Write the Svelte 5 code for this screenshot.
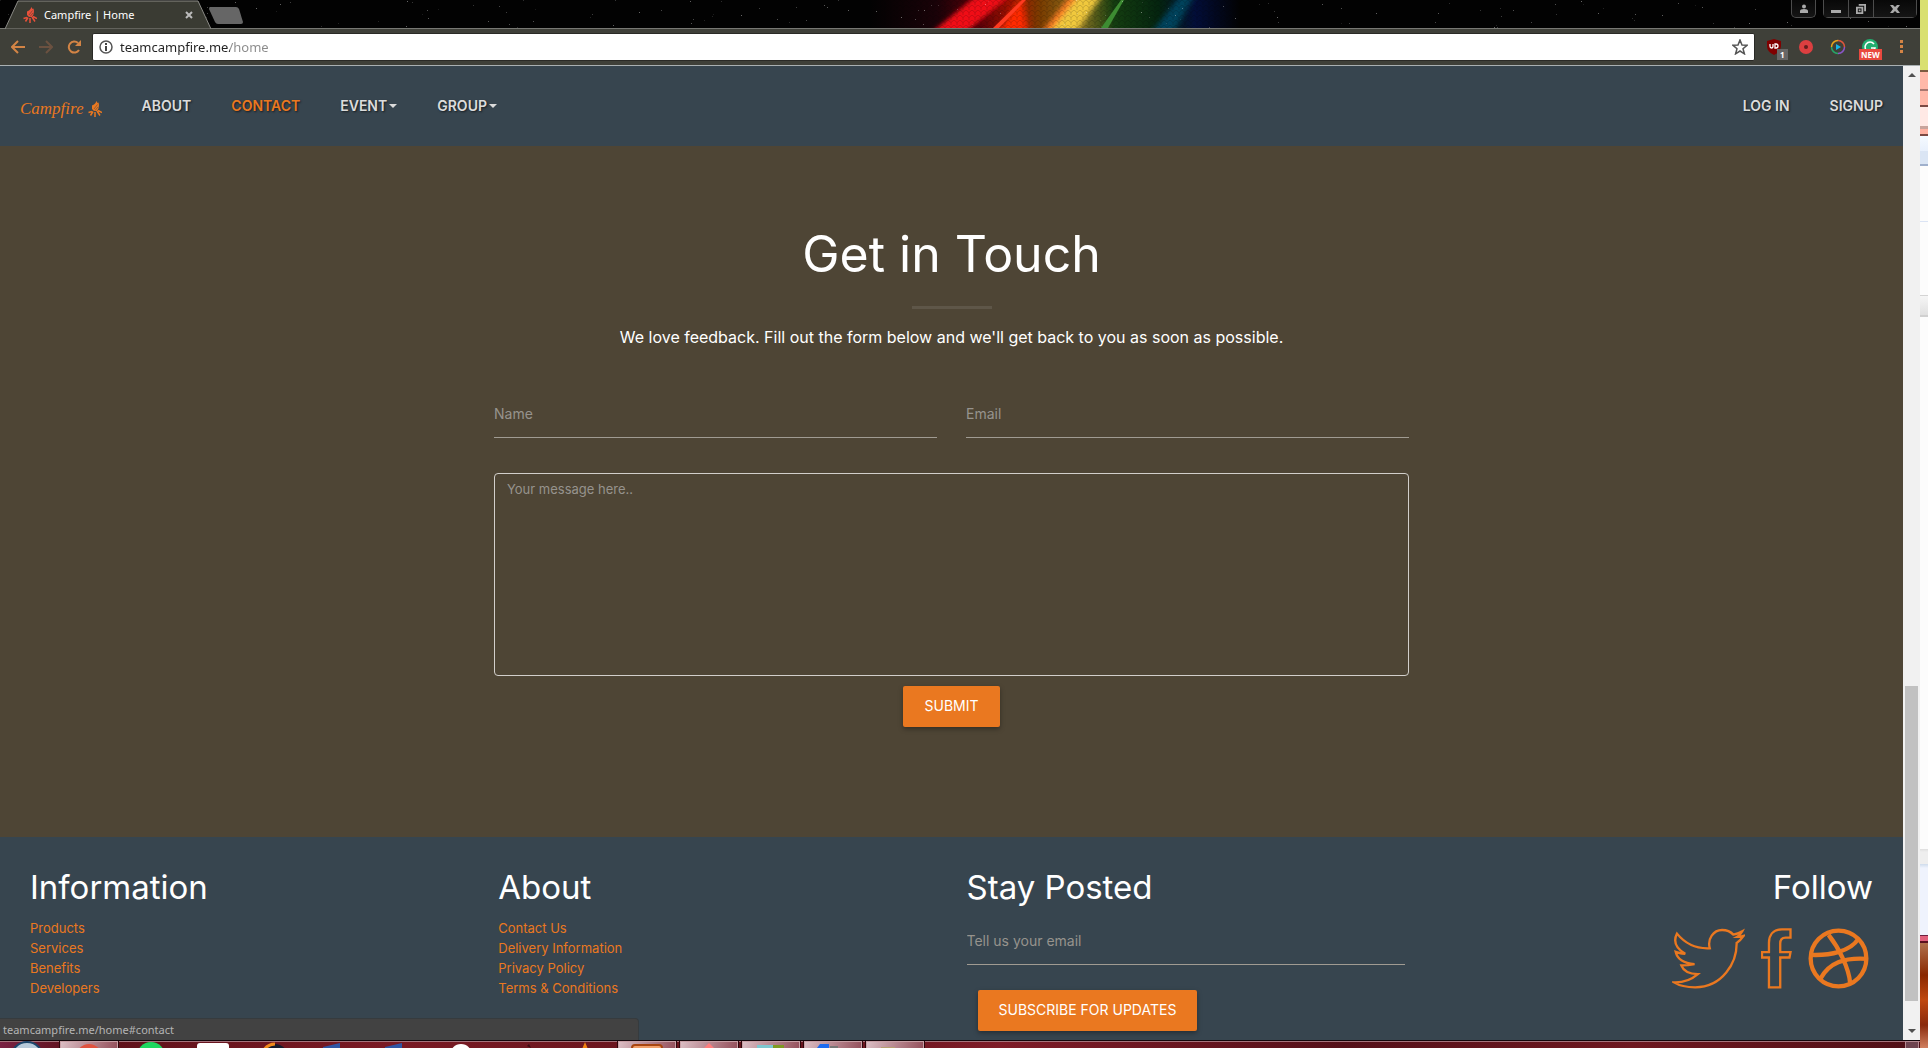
<script>
  const navLinks = [
    { label: 'ABOUT', href: '#about' },
    { label: 'CONTACT', href: '#contact', active: true },
    { label: 'EVENT', href: '#event', caret: true },
    { label: 'GROUP', href: '#group', caret: true }
  ];
  const accountLinks = [
    { label: 'LOG IN', href: '#login' },
    { label: 'SIGNUP', href: '#signup' }
  ];
  const columns = [
    { title: 'Information', links: ['Products', 'Services', 'Benefits', 'Developers'] },
    { title: 'About', links: ['Contact Us', 'Delivery Information', 'Privacy Policy', 'Terms & Conditions'] }
  ];
  const stars = Array.from({ length: 150 }, (_, i) => ({
    x: (i * 397 + ((i * i * 31) % 211)) % 1920,
    y: (i * 17 + ((i * i) % 13)) % 28,
    o: 0.1 + ((i * 7) % 10) / 30
  }));
  const tasks = ['chrome', 'green', 'white', 'fox', 'blue', 'blue2', 'disc', 'dot', 'cone', 'orange', 'pink', 'teal', 'navy', 'folder'];
  const raised = new Set(['chrome', 'orange', 'pink', 'teal', 'navy', 'folder']);
</script>

{#snippet campfire()}
  <svg class="fire" viewBox="0 0 28 32" aria-hidden="true">
    <path d="M17 0l2 4 2-1 1 5-1 7-3 5h-6l-4-4V9l4-2 3-3z" />
    <path class="bark" d="M12 16l7-9M14 19l6-7" />
    <path class="log" d="M10 21l-5 8M18 20l6 9M14 22v10M8 21l-7 2M20 19l8 4" />
  </svg>
{/snippet}

<div class="desktop">
  <div class="window">
    <header class="titlebar">
      <svg class="sky" viewBox="0 0 1920 28" preserveAspectRatio="none" aria-hidden="true">
        <defs>
          <linearGradient id="spectrum" x1="0" x2="1">
            <stop offset="0" stop-color="#020202" />
            <stop offset=".18" stop-color="#1a0208" />
            <stop offset=".3" stop-color="#5b0007" />
            <stop offset=".38" stop-color="#a01200" />
            <stop offset=".46" stop-color="#7a3c00" />
            <stop offset=".57" stop-color="#857020" />
            <stop offset=".66" stop-color="#143d10" />
            <stop offset=".78" stop-color="#04240f" />
            <stop offset=".88" stop-color="#020d38" />
            <stop offset="1" stop-color="#020202" />
          </linearGradient>
          <pattern id="mesh" width="6" height="5" patternUnits="userSpaceOnUse">
            <path d="M0 0l3 2.500L6 0M3 2.500V5" fill="none" stroke="#000" stroke-opacity=".16" />
          </pattern>
          <filter id="soft" x="-30%" width="160%"><feGaussianBlur stdDeviation="3 1" /></filter>
        </defs>
        <rect width="1920" height="28" fill="#020202" />
        <rect x="870" width="370" height="28" fill="url(#spectrum)" />
        <g filter="url(#soft)">
          <path d="M932 32L976-4h34l-44 36z" fill="#f00c14" />
          <path d="M998 32l24-36 6 36z" fill="#ff2a06" />
          <path d="M1042 32l28-36h8l-26 36z" fill="#ff7a20" />
          <path d="M1050 32l28-36h24l-26 36z" fill="#f0c83c" />
          <path d="M1152 32l28-36h14l-20 36z" fill="#06425c" />
        </g>
        <rect x="870" width="370" height="28" fill="url(#mesh)" />
        <path d="M993 28L1022 0h4l-27 28z" fill="#ff3a20" />
        <path d="M1101 28l20-28h3l-16 28z" fill="#3d8c32" />
        {#each stars as s}
          <rect x={s.x} y={s.y} width="1" height="1" fill="#fff" opacity={s.o} />
        {/each}
      </svg>
      <div class="tab">
        <svg class="tab-shape" viewBox="0 0 206 29" aria-hidden="true">
          <path d="M0 29L13 1h180l13 28z" fill="#3a3b33" stroke="#8b8b86" />
        </svg>
        <span class="tab-icon">{@render campfire()}</span>
        <span class="tab-title">Campfire | Home</span>
        <button class="plain close" aria-label="Close tab">
          <svg viewBox="0 0 8 8"><path d="M1 1l6 6M7 1L1 7" stroke="#bbb" stroke-width="2" /></svg>
        </button>
      </div>
      <button class="plain newtab" aria-label="New tab">
        <svg viewBox="0 0 34 18"><path d="M1 0h26q2 0 3 2l4 13q0 2-2 2H9q-2 0-3-2L0 2q0-2 1-2z" fill="#666" /></svg>
      </button>
      <div class="controls">
        <button class="ctl user" aria-label="Account">
          <svg viewBox="0 0 10 10"><circle cx="5" cy="2.500" r="2" /><path d="M1 9V7q0-2 4-2t4 2v2z" /></svg>
        </button>
        <div class="group">
          <button class="ctl" aria-label="Minimize"><svg viewBox="0 0 10 10"><path d="M0 6h10v3H0z" /></svg></button>
          <button class="ctl" aria-label="Restore">
            <svg viewBox="0 0 11 11"><path d="M3 0h8v8H9V2H3zM0 3h8v8H0zm2 2v4h4V5zm1 1h2v2H3z" fill-rule="evenodd" /></svg>
          </button>
          <button class="ctl wide" aria-label="Close"><svg viewBox="0 0 10 10"><path d="M0 1h3l2 2 2-2h3L7 5l3 4H7L5 7 3 9H0l3-4z" /></svg></button>
        </div>
      </div>
    </header>

    <div class="toolbar">
      <div class="history">
        <button class="plain" aria-label="Back"><svg class="i14" viewBox="0 0 14 14"><path d="M14 7H2M7 1L1 7l6 6" stroke="#d38445" /></svg></button>
        <button class="plain" aria-label="Forward"><svg class="i14" viewBox="0 0 14 14"><path d="M0 7h12M7 1l6 6-6 6" stroke="#6b5140" /></svg></button>
        <button class="plain" aria-label="Reload">
          <svg class="i14" viewBox="0 0 14 14"><path d="M11 3a5.500 5.500 0 1 0 1 7" stroke="#d38445" /><path d="M14 0v6H8z" fill="#d38445" /></svg>
        </button>
      </div>
      <div class="address">
        <svg class="i14" viewBox="0 0 14 14" aria-hidden="true">
          <circle cx="7" cy="7" r="6" stroke="#555" stroke-width="1.500" /><path d="M7 6v5M7 3v2" stroke="#444" stroke-width="2" />
        </svg>
        <input class="url" type="text" value="teamcampfire.me/home" aria-label="Address" />
        <button class="plain" aria-label="Bookmark this page">
          <svg class="i16" viewBox="0 0 16 16"><path d="M8 1l2 5 5 .3-4 3.500 1.400 5L8 12l-4.400 2.800 1.400-5L1 6.300 6 6z" stroke="#555" stroke-width="1.500" /></svg>
        </button>
      </div>
      <div class="extensions">
        <button class="plain ext" aria-label="Content blocker">
          <svg class="i16" viewBox="0 0 16 16">
            <path d="M8 0l7 2v5q0 6-7 9-7-3-7-9V2z" fill="#800000" />
            <path d="M4 5v2q0 2 1.500 2T7 7V5M9 5v4h1q2 0 2-2t-2-2z" fill="none" stroke="#fff" stroke-width="1.300" />
          </svg>
          <span class="badge grey">1</span>
        </button>
        <button class="plain ext" aria-label="Recorder"><svg class="i16" viewBox="0 0 16 16"><circle cx="8" cy="8" r="7" fill="#dc3f40" /><circle cx="8" cy="8" r="2" fill="#641d1d" /></svg></button>
        <button class="plain ext" aria-label="Player">
          <svg class="i16" viewBox="0 0 16 16">
            <g stroke-width="1.500"><path d="M1.500 8A6.500 6.500 0 0 1 8 1.500" stroke="#e8a51c" /><path d="M8 1.500A6.500 6.500 0 0 1 14.500 8" stroke="#e0563c" /><path d="M14.500 8A6.500 6.500 0 0 1 8 14.500" stroke="#8a55c8" /><path d="M8 14.500A6.500 6.500 0 0 1 1.500 8" stroke="#27a567" /></g>
            <path d="M6 5l5 3-5 3z" fill="#14b5e8" />
          </svg>
        </button>
        <button class="plain ext" aria-label="Writing helper">
          <svg class="i16" viewBox="0 0 16 16"><circle cx="8" cy="8" r="8" fill="#22ad70" /><path d="M12 5a5 5 0 1 0 1 4H9" stroke="#fff" stroke-width="1.500" /></svg>
          <span class="badge red">NEW</span>
        </button>
        <button class="plain menu" aria-label="Menu"><svg viewBox="0 0 4 14"><path d="M0 0h3v3H0zM0 5h3v3H0zM0 10h3v3H0z" fill="#d38445" /></svg></button>
      </div>
    </div>

    <div class="viewport">
      <div class="page">
        <nav class="nav">
          <a class="brand" href="#home"><span>Campfire</span>{@render campfire()}</a>
          <div class="links">
            {#each navLinks as l}
              <a href={l.href} class:active={l.active}>{l.label}{#if l.caret}<i class="caret"></i>{/if}</a>
            {/each}
          </div>
          <div class="links">
            {#each accountLinks as l}<a href={l.href}>{l.label}</a>{/each}
          </div>
        </nav>

        <main class="contact" id="contact">
          <h1>Get in Touch</h1>
          <hr />
          <p>We love feedback. Fill out the form below and we'll get back to you as soon as possible.</p>
          <form class="form">
            <div class="pair">
              <input class="field" type="text" placeholder="Name" aria-label="Name" />
              <input class="field" type="email" placeholder="Email" aria-label="Email" />
            </div>
            <textarea placeholder="Your message here.." aria-label="Your message"></textarea>
            <button class="btn" type="button">SUBMIT</button>
          </form>
        </main>

        <footer class="footer">
          {#each columns as c}
            <section>
              <h2>{c.title}</h2>
              <ul>
                {#each c.links as l}<li><a href="#contact">{l}</a></li>{/each}
              </ul>
            </section>
          {/each}
          <section>
            <h2>Stay Posted</h2>
            <input class="field" type="email" placeholder="Tell us your email" aria-label="Your email" />
            <button class="btn subscribe" type="button">SUBSCRIBE FOR UPDATES</button>
          </section>
          <section class="follow">
            <h2>Follow</h2>
            <div class="social">
              <a href="#twitter" aria-label="Twitter">
                <svg viewBox="158 805 222 184"><path stroke-width="7" d="M173 822C200 855 235 868 272 866 264 838 283 811 309 811 325 811 335 816 343 825 352 824 363 819 370 815 366 823 361 828 354 832 361 832 368 831 374 829 368 838 361 845 353 850 354 910 310 984 228 984 204 984 180 979 164 969 190 970 215 962 236 944 210 944 192 934 186 918 200 918 212 917 226 914 196 912 174 900 169 877 178 881 188 882 198 883 170 866 161 845 173 822Z" /></svg>
              </a>
              <a href="#facebook" aria-label="Facebook">
                <svg viewBox="425 805 93 184"><path stroke-width="7" d="M449 984V894H428V878H449V850C449 825 463 809 488 809H514V834H499C487 834 483 840 483 852V878H514L511 894H483V984Z" /></svg>
              </a>
              <a href="#dribbble" aria-label="Dribbble">
                <svg viewBox="562 805 184 184"><g stroke-width="13"><circle cx="654" cy="897" r="84" /><path d="M624 826C655 865 685 925 689 970M568 886C630 889 690 875 714 838M600 957C625 910 670 893 742 898" /></g></svg>
              </a>
            </div>
          </section>
        </footer>
      </div>

      <div class="scrollbar" aria-hidden="true">
        <i class="arrow up"></i>
        <div class="track"><div class="thumb"></div></div>
        <i class="arrow down"></i>
      </div>
      <div class="status">teamcampfire.me/home#contact</div>
    </div>

    <div class="taskbar">
      <button class="task start" aria-label="Start"><svg viewBox="0 0 58 24"><circle cx="27" cy="17" r="16" fill="#b8cbdb" stroke="#1c466c" stroke-width="2" /></svg></button>
      {#each tasks as t}
        <button class="task" class:raised={raised.has(t)} aria-label={t}>
          <svg viewBox="0 0 58 24">
            {#if t === 'chrome'}<circle cx="29" cy="16" r="13" fill="#e0523f" />
            {:else if t === 'green'}<circle cx="29" cy="15" r="14" fill="#1fd760" />
            {:else if t === 'white'}<rect x="13" y="2" width="32" height="22" rx="3" fill="#fff" />
            {:else if t === 'fox'}<circle cx="29" cy="16" r="13" fill="#151b2d" /><path d="M18 9q4-6 11-6" stroke="#f08a1c" stroke-width="3" />
            {:else if t === 'blue' || t === 'blue2'}<path d="M15 6l17-4v8H15z" fill="#2f56a5" />
            {:else if t === 'disc'}<circle cx="29" cy="14" r="11" fill="#fff" />
            {:else if t === 'dot'}<path d="M33 5l2-2 2 4z" fill="#3b0b12" />
            {:else if t === 'cone'}<path d="M29 1l5 12H24z" fill="#f08010" />
            {:else if t === 'orange'}<rect x="14" y="4" width="30" height="18" rx="3" fill="#f2a06a" stroke="#a84510" stroke-width="2" />
            {:else if t === 'pink'}<path d="M29 2l10 10H19z" fill="#ff7d7d" />
            {:else if t === 'teal'}<path d="M15 4h16v10H15z" fill="#7dc8d0" /><path d="M31 4h11v10H31z" fill="#7f9a22" />
            {:else if t === 'navy'}<path d="M13 7l3-4h9v8H13z" fill="#1c6bf0" /><path d="M26 5h8v8h-8z" fill="#777" />
            {:else}<path d="M15 6h14v8H15z" fill="#b8a070" />{/if}
          </svg>
        </button>
      {/each}
      <button class="peek" aria-label="Show desktop"></button>
    </div>
  </div>
  <div class="behind" aria-hidden="true"></div>
</div>

<style>
  :global(body) { margin: 0; background: #000; }
  .desktop { display: grid; grid-template-columns: minmax(0, 1fr) 8px; min-height: 100vh; font-family: Inter, 'Liberation Sans', sans-serif; }
  .desktop :global(*) { box-sizing: border-box; }
  .window { display: flex; flex-direction: column; min-width: 0; }
  svg { display: block; fill: none; }
  .plain { display: grid; place-items: center; padding: 0; border: 0; background: none; }
  .i14 { width: 14px; height: 14px; stroke-width: 2px; }
  .i16 { width: 16px; height: 16px; }
  .fire { width: 14px; height: 16px; fill: currentColor; }
  .fire .log { stroke: currentColor; stroke-width: 3px; }
  .fire .bark { stroke: #3a3b33; stroke-width: 1px; }

  .titlebar { position: relative; display: flex; align-items: flex-start; height: 29px; padding: 0 3px 0 5px; border-bottom: 1px solid #777873; font-family: 'Noto Sans', sans-serif; }
  .sky { position: absolute; inset: 0; width: 100%; height: 28px; }
  .tab { position: relative; display: flex; flex: none; align-items: center; width: 206px; height: 29px; padding: 0 18px; gap: 7px; }
  .tab-shape { position: absolute; inset: 0; width: 206px; height: 29px; }
  .tab-icon { position: relative; color: #e8503a; }
  .tab-title { position: relative; flex: 1; font-size: 11px; line-height: 16px; color: #fff; white-space: nowrap; }
  .close { position: relative; }
  .close svg { width: 8px; height: 8px; }
  .newtab { position: relative; flex: none; padding-top: 7px; margin-left: -2px; }
  .newtab svg { width: 34px; height: 18px; }
  .controls { position: relative; display: flex; gap: 7px; margin-left: auto; }
  .group { display: flex; border: 1px solid #4c4c4c; border-top: 0; border-radius: 0 0 5px 5px; }
  .ctl { display: grid; place-items: center; width: 25px; height: 17px; padding: 0; border: 0; border-right: 1px solid #4c4c4c; background: linear-gradient(#080808, #151515); }
  .ctl svg { width: 10px; height: 10px; fill: #aaa; }
  .ctl.wide { width: 42px; border: 0; }
  .ctl.user { height: 18px; border: 1px solid #4c4c4c; border-top: 0; border-radius: 0 0 5px 5px; }

  .toolbar { display: flex; align-items: center; gap: 11px; height: 37px; padding: 0 16px 0 11px; background: #3f4039; border-bottom: 1px solid #a9b0b2; }
  .history { display: flex; gap: 14px; }
  .address { display: flex; flex: 1; align-items: center; gap: 7px; height: 28px; padding: 0 6px; background: #fff; border: 1px solid #2a2a26; border-radius: 2px; }
  .url { flex: 1; min-width: 0; height: 24px; padding: 0; border: 0; font-family: 'Noto Sans', sans-serif; font-size: 13px; color: transparent; background: linear-gradient(90deg, #222 110px, #8a8a8a 110px); background-clip: text; }
  .extensions { display: flex; align-items: center; gap: 16px; }
  .ext { position: relative; width: 16px; height: 22px; }
  .badge { position: absolute; left: 11px; top: 13px; padding: 0 3px; font: 700 8px/11px 'Noto Sans', sans-serif; color: #fff; }
  .grey { background: #666; }
  .red { left: -3px; padding: 0 2px; background: #e9493f; }
  .menu { margin-left: 6px; }
  .menu svg { width: 4px; height: 14px; }

  .viewport { position: relative; display: flex; flex: 1; }
  .page { display: flex; flex: 1; flex-direction: column; min-width: 0; background: #4e4535; }
  .nav { display: flex; align-items: center; height: 80px; padding: 0 20px; gap: 40px; background: #37454f; }
  .brand { display: flex; align-items: center; gap: 4px; padding-top: 6px; font: italic 17px/24px 'Liberation Serif', serif; color: #ea7820; text-decoration: none; }
  .brand .fire .bark { stroke: #37454f; }
  .links { display: flex; gap: 40px; }
  .links:last-child { margin-left: auto; }
  .links a { display: flex; align-items: center; gap: 2px; font-size: 14px; font-weight: 600; line-height: 20px; color: #dcdcdc; text-decoration: none; text-shadow: 1px 1px 2px rgba(0, 0, 0, .6); white-space: nowrap; }
  .links a.active { color: #ea7820; }
  .caret { border: 4px solid transparent; border-top-color: #dcdcdc; border-bottom: 0; }

  .contact { display: flex; flex: 1; flex-direction: column; align-items: center; padding: 78px 30px 110px; color: #fff; }
  h1 { margin: 0; font-size: 50px; font-weight: 400; line-height: 60px; }
  hr { width: 80px; height: 3px; margin: 22px 0 16px; border: 0; background: #5e5648; }
  p { margin: 0; font-size: 16px; line-height: 24px; text-align: center; }
  .form { display: flex; flex-direction: column; align-items: center; width: 100%; max-width: 915px; margin-top: 42px; }
  .pair { display: grid; grid-template-columns: 1fr 1fr; gap: 29px; width: 100%; }
  .field { display: block; width: 100%; height: 47px; padding: 0 0 2px; border: 0; border-bottom: 1px solid #a09b92; border-radius: 0; background: none; font: 14px/20px Inter, sans-serif; color: #fff; }
  .field::placeholder, textarea::placeholder { color: #96938d; opacity: 1; }
  textarea { width: 100%; height: 203px; margin: 35px 0 10px; padding: 5px 12px; border: 1px solid #d2cfcb; border-radius: 4px; background: none; font: 13px/20px Inter, sans-serif; color: #fff; resize: none; }
  .btn { height: 41px; padding: 0 21px 2px; border: 0; border-radius: 2px; background: #ea7820; color: #fff; font: 14px/20px Inter, sans-serif; box-shadow: 0 2px 5px rgba(0, 0, 0, .35); }

  .footer { display: grid; grid-template-columns: repeat(4, minmax(0, 1fr)); gap: 30px; padding: 30px 30px 9px; background: #37454f; }
  h2 { margin: 0; font-size: 33px; font-weight: 400; line-height: 40px; color: #fff; }
  ul { margin: 11px 0 0; padding: 0; list-style: none; }
  li { height: 20px; font-size: 13px; line-height: 20px; }
  li a { color: #ea7820; text-decoration: none; }
  .footer .field { margin-top: 11px; }
  .subscribe { margin: 25px 0 0 11px; }
  .follow h2 { text-align: right; }
  .social { display: flex; justify-content: flex-end; gap: 16px; padding: 21px 4px 0 0; }
  .social svg { height: 61px; stroke: #ea7820; }

  .scrollbar { display: flex; flex-direction: column; align-items: center; width: 17px; background: #f1f1f1; }
  .arrow { width: 8px; margin: 7px 0 6px; border: 4px solid transparent; border-top: 0; border-bottom-color: #505050; }
  .arrow.down { margin: 6px 0 7px; border-top: 4px solid #505050; border-bottom: 0; }
  .track { display: grid; flex: 1; grid-template-rows: 603fr 315fr 22fr; }
  .thumb { grid-row: 2; width: 13px; background: #c1c1c1; }
  .status { position: absolute; left: 0; bottom: 0; width: 639px; height: 22px; padding: 0 3px; border: 1px solid #363b3e; border-width: 1px 1px 0 0; border-radius: 0 4px 0 0; background: #424242; font: 11px/21px 'Noto Sans', sans-serif; color: #b4b4b4; }

  .taskbar { display: flex; gap: 4px; height: 8px; padding-right: 1px; overflow: hidden; border-top: 1px solid #12060a; background: linear-gradient(90deg, #7a2344, #5c1019 4%, #7a1a24 20%, #62131b 40%, #7e1c28 52%, #541019 70%, #6e1820 85%, #4f0f16); box-shadow: inset 0 1px #a5737c; }
  .task { width: 58px; height: 24px; padding: 0; border: 0; background: none; }
  .task.start { width: 56px; }
  .task svg { width: 58px; height: 24px; }
  .raised { background: linear-gradient(110deg, #dcc0c6, #8c4450); box-shadow: inset 0 0 0 1px #c9a0a6, 0 0 0 1px #2e060b; }
  .peek { width: 14px; height: 24px; margin-left: auto; padding: 0; border: 1px solid #b58a92; background: #6e4450; }

  .behind {
    background: linear-gradient(180deg,
      #d9e070 0 70px, #7b5b40 70px 72px, #ffb9a9 72px 89px, #a97870 89px 91px, #ffb9a9 91px 105px, #7b4a44 105px 107px,
      #ffe9e5 107px 126px, #c8a49c 126px 129px, #ffb2a2 129px 134px, #7b4a44 134px 136px, #f5faff 136px, #e8f0fc 151px,
      #dae5f4 151px 164px, #9fb0cc 164px 166px, #fcfcfc 166px 221px, #dbe4f4 221px 222px, #fcfcfc 222px 295px,
      #d4d4d4 295px 296px, #f6f6f6 296px, #e0e0e0 315px, #d0d0d0 315px 317px, #fcfcfc 317px 849px, #dedede 849px, #eee 852px 864px,
      #cfdcec 864px, #eff3fd 868px 935px, #6b2040 935px 936px, #e0607c 936px 941px, #5b1020 941px 943px, #b0704c 943px, #8a2800 975px, #c04810 1000px, #8a2a0c 1025px, #d08060 1048px);
  }
</style>
